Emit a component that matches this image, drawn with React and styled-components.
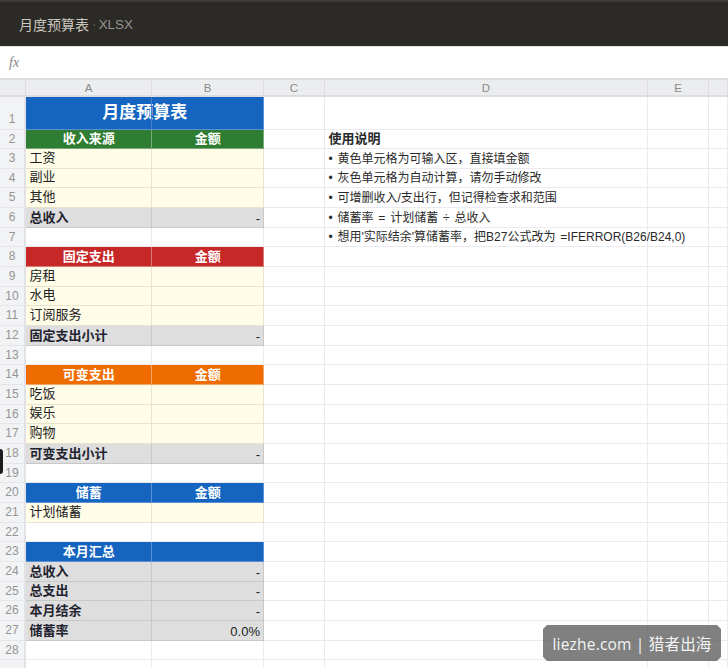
import React from 'react'
import styled, {createGlobalStyle} from 'styled-components'

const GlobalStyle = createGlobalStyle`
  html, body {
    margin: 0;
    height: 100%;
    overflow: hidden;
    background: #fff;
    font-family: "Liberation Sans", "Noto Sans CJK SC", sans-serif;
  }
`

const Page = styled.div`
  position: relative;
  width: 728px;
  height: 668px;
  overflow: hidden;
`

const TitleBar = styled.header`
  display: flex;
  align-items: center;
  height: 46px;
  box-sizing: border-box;
  padding-left: 19px;
  background: #2b2a27;
  border-top: 2px solid #3d3c3a;
  font-size: 14px;
  color: #c9c6bd;
`

const TitleDot = styled.span`
  margin: 0 2px 0 3px;
  color: #5f5e5a;
`

const TitleExt = styled.span`
  font-size: 13.4px;
  color: #96948d;
`

const FormulaBar = styled.div`
  display: flex;
  align-items: center;
  height: 34px;
  box-sizing: border-box;
  padding-left: 9px;
  border-top: 1px solid #e4e4e8;
  border-bottom: 2px solid #dcdce1;
  font-family: "Liberation Serif", serif;
  font-style: italic;
  font-size: 14px;
  color: #888;
`

const Row = styled.div`
  display: grid;
  grid-template-columns: 26px 126px 112px 61px 323px 61px 1fr;
  grid-template-rows: minmax(0, 1fr);
  height: ${(props) => props.$height}px;
  box-sizing: border-box;
  line-height: 14px;
`

const HeadCell = styled.div`
  display: flex;
  align-items: center;
  justify-content: center;
  box-sizing: border-box;
  height: 17px;
  background: #ecedef;
  border-right: 1px solid #dcdce1;
  border-bottom: 2px solid #dcdce1;
  font-size: 11.5px;
  color: #8a8a8a;
`

const RowNumber = styled.div`
  display: flex;
  align-items: ${(props) => (props.$tall ? 'flex-end' : 'center')};
  justify-content: center;
  box-sizing: border-box;
  padding-bottom: ${(props) => (props.$tall ? '3px' : '1px')};
  background: #f2f3f4;
  border-right: 2px solid #e2e2e6;
  border-bottom: 1px solid #e6e6ea;
  font-size: 12px;
  color: #959595;
`

const fills = {
  blue: {bg: '#1565c0', line: '#5b91d2'},
  green: {bg: '#2e7d32', line: '#76a879'},
  red: {bg: '#c62828', line: '#d97a7a'},
  orange: {bg: '#ef6c00', line: '#f4a566'},
  input: {bg: '#fffde7', line: '#e6e4cf'},
  total: {bg: '#dedede', line: '#c8c8c8'},
  none: {bg: '#fff', line: '#ebebef'},
}

const Cell = styled.div`
  display: flex;
  align-items: center;
  box-sizing: border-box;
  min-width: 0;
  padding: 0 3px 2px 3.5px;
  white-space: nowrap;
  font-size: 13px;
  color: #222;
  background: ${(props) => fills[props.$fill || 'none'].bg};
  border-right: 1px solid ${(props) => fills[props.$fill || 'none'].line};
  border-bottom: 1px solid ${(props) => fills[props.$fill || 'none'].line};
`

const BandCell = styled(Cell)`
  justify-content: center;
  padding-bottom: 0;
  font-weight: 700;
  color: #fff;
`

const TotalLabel = styled(Cell)`
  padding-bottom: 0;
  font-weight: 700;
  color: #1f2430;
`

const TotalValue = styled(Cell)`
  justify-content: flex-end;
  padding-top: 2px;
  padding-bottom: 0;
`

const TitleCell = styled(BandCell)`
  position: relative;
  grid-column: span 2;
  padding-bottom: 0;
  font-size: 17px;
  &::after {
    content: '';
    position: absolute;
    top: 0;
    bottom: 0;
    left: 125px;
    width: 1px;
    background: #4480c8;
  }
`

const NoteCell = styled(Cell)`
  position: relative;
  z-index: 1;
  padding-bottom: ${(props) => (props.$bold ? '1px' : '0')};
  color: #2a2a2a;
  font-size: ${(props) => (props.$bold ? '13px' : '12px')};
  font-weight: ${(props) => (props.$bold ? 700 : 400)};
  word-spacing: 1.5px;
`

const SideTab = styled.div`
  position: absolute;
  left: -3px;
  top: 449px;
  width: 6px;
  height: 25px;
  border-radius: 3px;
  background: #1c1c1c;
`

const Watermark = styled.div`
  position: absolute;
  z-index: 2;
  left: 543px;
  top: 625px;
  width: 178px;
  height: 36px;
  display: flex;
  align-items: center;
  justify-content: center;
  background: rgba(85, 85, 85, 0.75);
  clip-path: polygon(4px 0, calc(100% - 4px) 0, 100% 4px, 100% calc(100% - 4px), calc(100% - 4px) 100%, 4px 100%, 0 calc(100% - 4px), 0 4px);
  font-family: "Open Sans", "Noto Sans CJK SC", sans-serif;
  font-size: 15.5px;
  letter-spacing: 0.2px;
  color: #f4f4f4;
  white-space: nowrap;
`

const notes = {
  2: {text: '使用说明', bold: true},
  3: {text: '• 黄色单元格为可输入区，直接填金额'},
  4: {text: '• 灰色单元格为自动计算，请勿手动修改'},
  5: {text: '• 可增删收入/支出行，但记得检查求和范围'},
  6: {text: '• 储蓄率 = 计划储蓄 ÷ 总收入'},
  7: {text: "• 想用'实际结余'算储蓄率，把B27公式改为 =IFERROR(B26/B24,0)"},
}

const rows = [
  {n: 2, kind: 'band', fill: 'green', a: '收入来源', b: '金额'},
  {n: 3, kind: 'input', a: '工资'},
  {n: 4, kind: 'input', a: '副业'},
  {n: 5, kind: 'input', a: '其他'},
  {n: 6, kind: 'total', a: '总收入', b: '-'},
  {n: 7},
  {n: 8, kind: 'band', fill: 'red', a: '固定支出', b: '金额'},
  {n: 9, kind: 'input', a: '房租'},
  {n: 10, kind: 'input', a: '水电'},
  {n: 11, kind: 'input', a: '订阅服务'},
  {n: 12, kind: 'total', a: '固定支出小计', b: '-'},
  {n: 13},
  {n: 14, kind: 'band', fill: 'orange', a: '可变支出', b: '金额'},
  {n: 15, kind: 'input', a: '吃饭'},
  {n: 16, kind: 'input', a: '娱乐'},
  {n: 17, kind: 'input', a: '购物'},
  {n: 18, kind: 'total', a: '可变支出小计', b: '-'},
  {n: 19},
  {n: 20, kind: 'band', fill: 'blue', a: '储蓄', b: '金额'},
  {n: 21, kind: 'input', a: '计划储蓄'},
  {n: 22},
  {n: 23, kind: 'band', fill: 'blue', a: '本月汇总'},
  {n: 24, kind: 'total', a: '总收入', b: '-'},
  {n: 25, kind: 'total', a: '总支出', b: '-'},
  {n: 26, kind: 'total', a: '本月结余', b: '-'},
  {n: 27, kind: 'total', a: '储蓄率', b: '0.0%'},
  {n: 28},
  {n: 29},
]

// the sheet is scaled a little, so rows are 19.67px on average: keep their edges on whole pixels
const rowTop = (n) => Math.round((n - 3) * 19.67)
const rowHeight = (n) => (n === 2 ? 19 : rowTop(n + 1) - rowTop(n))

const SheetRow = ({row}) => {
  const note = notes[row.n]
  let a = <Cell />
  let b = <Cell />
  if (row.kind === 'band') {
    a = <BandCell $fill={row.fill}>{row.a}</BandCell>
    b = <BandCell $fill={row.fill}>{row.b}</BandCell>
  } else if (row.kind === 'input') {
    a = <Cell $fill='input'>{row.a}</Cell>
    b = <Cell $fill='input' />
  } else if (row.kind === 'total') {
    a = <TotalLabel $fill='total'>{row.a}</TotalLabel>
    b = <TotalValue $fill='total'>{row.b}</TotalValue>
  }
  return (
    <Row $height={rowHeight(row.n)}>
      {/* row 29 is only a sliver at the bottom, its number falls below the fold */}
      <RowNumber>{row.n < 29 && row.n}</RowNumber>
      {a}
      {b}
      <Cell />
      {note ? <NoteCell $bold={note.bold}>{note.text}</NoteCell> : <Cell />}
      <Cell />
      <Cell />
    </Row>
  )
}

const App = () => {
  return (
    <Page>
      <GlobalStyle />
      <TitleBar>
        月度预算表<TitleDot>·</TitleDot>
        <TitleExt>XLSX</TitleExt>
      </TitleBar>
      <FormulaBar>fx</FormulaBar>
      <Row $height={17}>
        {['', 'A', 'B', 'C', 'D', 'E', ''].map((label, i) => (
          <HeadCell key={i}>{label}</HeadCell>
        ))}
      </Row>
      <Row $height={33}>
        <RowNumber $tall>1</RowNumber>
        <TitleCell $fill='blue'>月度预算表</TitleCell>
        <Cell />
        <Cell />
        <Cell />
        <Cell />
      </Row>
      {rows.map((row) => (
        <SheetRow key={row.n} row={row} />
      ))}
      <SideTab />
      <Watermark>liezhe.com | 猎者出海</Watermark>
    </Page>
  )
}

export default App
